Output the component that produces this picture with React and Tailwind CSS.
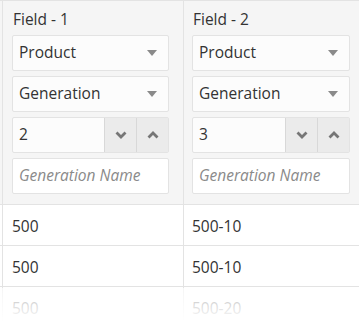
const font = { fontFamily: '"Open Sans", "Liberation Sans", sans-serif' };

const Caret = () => (
    <svg width="10" height="6" viewBox="0 0 10 6" className="shrink-0">
        <polygon points="0,0 10,0 5,6" fill="#8a8a8a" />
    </svg>
);

const Chevron = ({ up }) => (
    <svg width="12" height="8" viewBox="0 0 12 8">
        <polyline
            points={up ? '1.5,6.5 6,2 10.5,6.5' : '1.5,1.5 6,6 10.5,1.5'}
            fill="none"
            stroke="#767676"
            strokeWidth="2.8"
        />
    </svg>
);

const SelectBox = ({ label }) => (
    <div className="flex items-center justify-between h-9 pl-[6px] pr-[11px] bg-[#fcfcfc] border border-[#e3e3e3] rounded-[2px] text-[15.5px] text-[#333]">
        <span>{label}</span>
        <Caret />
    </div>
);

const NumberBox = ({ value }) => (
    <div className="flex h-9 bg-[#fcfcfc] border border-[#e3e3e3] rounded-[2px]">
        <div className="flex-1 flex items-center pl-[6px] text-[15.5px] text-[#333]">{value}</div>
        <div className="w-8 flex items-center justify-center bg-[#ebebeb] border-l border-[#d8d8d8]">
            <Chevron />
        </div>
        <div className="w-8 flex items-center justify-center bg-[#ebebeb] border-l border-[#d8d8d8]">
            <Chevron up />
        </div>
    </div>
);

const FieldColumn = ({ title, value, className }) => (
    <div className={className}>
        <div className="h-5 leading-5 text-[15.5px] text-[#333] pl-[1px] mb-[6px]">{title}</div>
        <div className="flex flex-col gap-[5px]">
            <SelectBox label="Product" />
            <SelectBox label="Generation" />
            <NumberBox value={value} />
            <div className="flex items-center h-9 pl-[6px] bg-white border border-[#e3e3e3] rounded-[2px] text-[15.5px] italic text-[#8a8a8a]">
                Generation Name
            </div>
        </div>
    </div>
);

const rows = [
    ['500', '500-10'],
    ['500', '500-10'],
    ['500', '500-20'],
];

export default function App() {
    return (
        <div className="relative w-[359px] h-[322px] overflow-hidden bg-white" style={font}>
            <div className="flex bg-[#f5f5f5] border-t border-b border-[#e3e3e3] pl-[2px]">
                <FieldColumn
                    title="Field - 1"
                    value="2"
                    className="w-[182px] shrink-0 border-l border-r border-[#e3e3e3] pt-[8px] pb-[10px] pl-[9px] pr-[14px]"
                />
                <FieldColumn
                    title="Field - 2"
                    value="3"
                    className="w-[182px] shrink-0 pt-[8px] pb-[10px] pl-2 pr-[16px]"
                />
            </div>
            {rows.map((r, i) => (
                <div key={i} className="flex h-[41px] border-b border-[#e3e3e3] pl-[2px]">
                    <div className="w-[182px] shrink-0 flex items-center pl-[9px] pt-[3px] border-l border-r border-[#e3e3e3] text-[15.5px] text-[#333]">
                        {r[0]}
                    </div>
                    <div className="flex-1 flex items-center pl-2 pt-[3px] text-[15.5px] text-[#333]">{r[1]}</div>
                </div>
            ))}
            <div className="absolute left-0 right-0 top-[288px] bottom-0 bg-linear-to-b from-white/65 to-white" />
        </div>
    );
}
